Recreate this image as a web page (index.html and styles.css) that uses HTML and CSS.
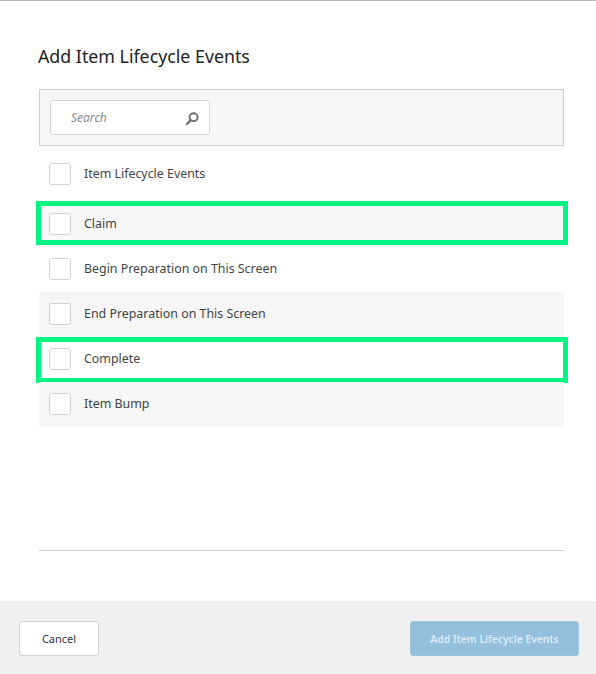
FILE: index.html
```html
<!DOCTYPE html>
<html lang="en">
<head>
<meta charset="utf-8">
<title>Add Item Lifecycle Events</title>
<link rel="stylesheet" href="styles.css">
</head>
<body>
<div class="dialog">
  <main class="content">
    <h1 class="title">Add Item Lifecycle Events</h1>
    <div class="search-panel">
      <div class="search-box">
        <span class="search-placeholder">Search</span>
        <svg class="search-icon" width="16" height="16" viewBox="0 0 16 16" aria-hidden="true">
          <circle cx="10.6" cy="6.2" r="4" fill="none" stroke="#6f6f6f" stroke-width="1.9"/>
          <path d="M7.6 9.4 L4 13" fill="none" stroke="#6f6f6f" stroke-width="2.4" stroke-linecap="round"/>
        </svg>
      </div>
    </div>
    <ul class="list">
      <li class="row row-first"><span class="check"></span><span class="label">Item Lifecycle Events</span></li>
      <li class="row shaded"><span class="check"></span><span class="label">Claim</span><span class="highlight"></span></li>
      <li class="row"><span class="check"></span><span class="label">Begin Preparation on This Screen</span></li>
      <li class="row shaded"><span class="check"></span><span class="label">End Preparation on This Screen</span></li>
      <li class="row"><span class="check"></span><span class="label">Complete</span><span class="highlight highlight-tall"></span></li>
      <li class="row shaded"><span class="check"></span><span class="label">Item Bump</span></li>
    </ul>
    <hr class="divider">
  </main>
  <footer class="footer">
    <button class="btn btn-cancel" type="button">Cancel</button>
    <button class="btn btn-add" type="button">Add Item Lifecycle Events</button>
  </footer>
</div>
</body>
</html>
```

FILE: styles.css
```css
* { box-sizing: border-box; }
html, body { margin: 0; padding: 0; height: 100%; background: #fff; }
body { font-family: "Noto Sans", "Open Sans", sans-serif; color: #3f3f3f; }

.dialog {
  width: 596px;
  height: 674px;
  display: flex;
  flex-direction: column;
  border-top: 1px solid #b9b9b9;
  overflow: hidden;
}

.content { flex: 1; padding: 0 32px 0 39px; }

.title {
  margin: 43px 0 0 -1px;
  font-size: 17.8px;
  line-height: 24px;
  font-weight: 400;
  color: #222;
}

.search-panel {
  margin-top: 21px;
  height: 57px;
  padding: 10px;
  background: #f6f6f6;
  border: 1px solid #cfcfcf;
}

.search-box {
  width: 160px;
  height: 35px;
  display: flex;
  align-items: center;
  justify-content: space-between;
  padding: 0 10px 0 20px;
  background: #fff;
  border: 1px solid #d6d6d6;
  border-radius: 3px;
}

.search-placeholder { font-size: 12px; font-style: italic; color: #8b8b8b; }
.search-icon { display: block; margin-top: 2px; }

.list { list-style: none; margin: 6px 0 0; padding: 0; }

.row {
  position: relative;
  height: 45px;
  display: flex;
  align-items: flex-start;
  padding: 11px 0 0 10px;
}
.row-first { height: 50px; }
.shaded { background: #f6f6f6; }

.check {
  width: 22px;
  height: 22px;
  flex: none;
  background: #fff;
  border: 1px solid #d2d2d2;
  border-radius: 3px;
}

.label { margin-left: 13px; font-size: 12.4px; line-height: 22px; color: #444; }

.highlight {
  position: absolute;
  left: -3px;
  right: -4px;
  top: -1px;
  height: 44px;
  border: 5px solid #00f585;
}
.highlight-tall { top: 0; height: 46px; }

.divider {
  margin: 123px 0 0;
  height: 1px;
  border: 0;
  background: #cfcfcf;
}

.footer {
  flex: none;
  height: 73px;
  display: flex;
  align-items: flex-start;
  justify-content: space-between;
  padding: 20px 17px 0 19px;
  background: #f0f0f0;
}

.btn {
  height: 35px;
  border-radius: 3px;
  font-family: inherit;
  padding: 0;
}
.btn-cancel { width: 80px; font-size: 11px; background: #fff; border: 1px solid #d2d2d2; color: #333; }
.btn-add { width: 169px; font-size: 10.3px; background: #94c0dd; border: 1px solid #9cc5e0; color: #dcebf5; font-weight: 600; }
```
